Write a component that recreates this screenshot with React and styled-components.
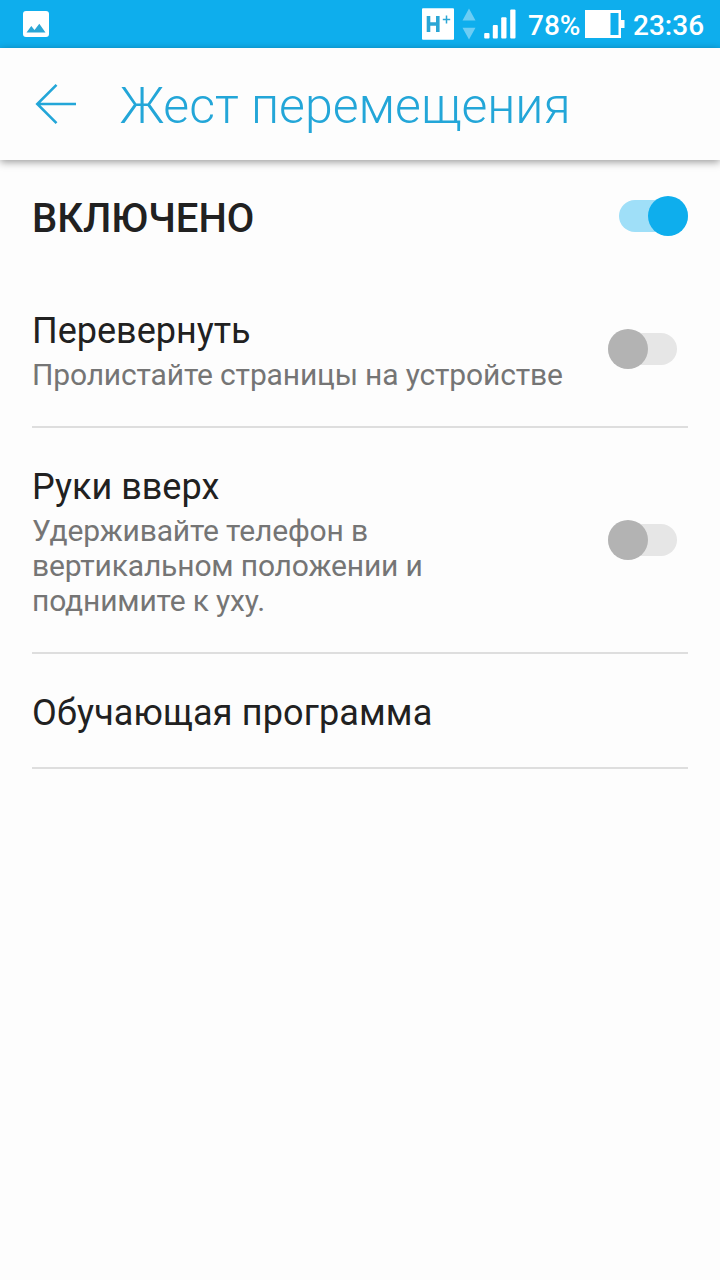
import React from 'react';
import styled, { createGlobalStyle } from 'styled-components';

const GlobalStyle = createGlobalStyle`
  * { box-sizing: border-box; }
  body {
    margin: 0;
    background: #fdfdfd;
    font-family: Roboto, "Noto Sans", sans-serif;
    color: #212121;
  }
`;

const Screen = styled.div`
  display: flex;
  flex-direction: column;
  width: 720px;
  height: 1280px;
  overflow: hidden;
  background: #fdfdfd;
`;

const StatusBar = styled.header`
  display: flex;
  align-items: center;
  justify-content: space-between;
  flex: none;
  height: 48px;
  padding: 0 16px 0 23px;
  background: #0eaeed;
  color: #fff;
`;

const StatusGroup = styled.div`
  display: flex;
  align-items: center;
`;

const StatusText = styled.span`
  font-size: 28px;
  font-weight: 500;
  line-height: 48px;
  padding-top: 2px;
  height: 48px;
  white-space: nowrap;
  width: ${(p) => p.$width}px;
  margin-left: ${(p) => p.$gap}px;
`;

const AppBar = styled.div`
  display: flex;
  align-items: center;
  flex: none;
  height: 112px;
  padding-left: 35px;
  background: #fdfdfd;
  color: #23a6d8;
  box-shadow: 0 2px 8px rgba(0, 0, 0, 0.4);
`;

const Title = styled.h1`
  margin: 4px 0 0 43px;
  font-size: 50px;
  font-weight: 300;
  line-height: 60px;
  white-space: nowrap;
`;

const Content = styled.main`
  display: flex;
  flex-direction: column;
  padding: 0 32px;
`;

const MasterRow = styled.section`
  display: flex;
  align-items: center;
  justify-content: space-between;
  height: 112px;
`;

const MasterLabel = styled.h2`
  margin: 6px 0 0;
  font-size: 40px;
  font-weight: 500;
  line-height: 48px;
`;

const Row = styled.section`
  display: flex;
  align-items: center;
  justify-content: space-between;
  height: ${(p) => p.$height}px;
  padding-right: 11px;
  border-bottom: 2px solid #dedede;
`;

const RowText = styled.div`
  display: flex;
  flex-direction: column;
  width: 544px;
  padding-top: ${(p) => p.$shift || 0}px;
`;

const RowTitle = styled.h3`
  margin: 0;
  font-size: 36px;
  font-weight: 400;
  line-height: 42px;
  letter-spacing: ${(p) => p.$tracking || 0}px;
  white-space: nowrap;
`;

const RowSummary = styled.p`
  margin: 5px 0 0;
  font-size: 30px;
  line-height: 35px;
  letter-spacing: -0.155px;
  color: #757575;
  white-space: pre-line;
`;

const Track = styled.button`
  display: flex;
  align-items: center;
  justify-content: ${(p) => (p.$on ? 'flex-end' : 'flex-start')};
  flex: none;
  width: 69px;
  height: 32px;
  padding: 0;
  border: 0;
  border-radius: 16px;
  background: ${(p) => (p.$on ? '#9fdff8' : '#e6e6e6')};
`;

const Knob = styled.span`
  flex: none;
  width: 40px;
  height: 40px;
  border-radius: 50%;
  background: ${(p) => (p.$on ? '#0eaeed' : '#b3b3b3')};
`;

const Switch = ({ on = false, label }) => (
  <Track type="button" role="switch" aria-checked={on} aria-label={label} $on={on}>
    <Knob $on={on} />
  </Track>
);

const PictureIcon = () => (
  <svg width="26" height="26" viewBox="0 0 26 26">
    <rect width="26" height="26" rx="3" fill="#fff" />
    <path d="M3.5 21.5 8.3 15l3.2 4 4.8-6.2 6.2 8.7z" fill="#2ba6d5" />
  </svg>
);

const NetworkIcon = () => (
  <svg width="96" height="48" viewBox="0 0 96 48">
    <rect x="0" y="8.3" width="32" height="31.4" rx="1" fill="#fff" />
    <path d="M6.5 16v16M15.8 16v16M6.5 24h9.3" stroke="#2ba6d5" strokeWidth="3.6" fill="none" />
    <path d="M20.8 19.5h7.4M24.5 15.6v7.8" stroke="#2ba6d5" strokeWidth="1.5" fill="none" />
    <path d="M47 8.5 53.5 20.5h-13zM40.5 27.7h13L47 39.5z" fill="#6dcdf4" />
    <g fill="#fff">
      <rect x="62.2" y="33" width="5.3" height="5.5" rx="1" />
      <rect x="70.8" y="25" width="5" height="13.5" rx="1" />
      <rect x="79.2" y="17.3" width="5.3" height="21.2" rx="1" />
      <rect x="88.2" y="9.5" width="5.3" height="29" rx="1" />
    </g>
  </svg>
);

const BatteryIcon = () => (
  <svg width="40" height="48" viewBox="0 0 40 48">
    <path fillRule="evenodd" fill="#fff" d="M0 10h36v28H0zM25.5 13v22h8V13z" />
    <rect x="36" y="20" width="3.5" height="8" fill="#fff" />
  </svg>
);

const BackIcon = () => (
  <svg width="42" height="42" viewBox="0 0 42 42" fill="none" stroke="currentColor" strokeWidth="2.6">
    <path d="M21.5 1.8 2.3 21l19.2 19.2M2.3 21H41" />
  </svg>
);

export default function App() {
  return (
    <Screen>
      <GlobalStyle />
      <StatusBar>
        <PictureIcon />
        <StatusGroup>
          <NetworkIcon />
          <StatusText $width={57} $gap={10}>78%</StatusText>
          <BatteryIcon />
          <StatusText $width={71} $gap={8}>23:36</StatusText>
        </StatusGroup>
      </StatusBar>
      <AppBar>
        <BackIcon />
        <Title>Жест перемещения</Title>
      </AppBar>
      <Content>
        <MasterRow>
          <MasterLabel>ВКЛЮЧЕНО</MasterLabel>
          <Switch on label="Включено" />
        </MasterRow>
        <Row $height={156}>
          <RowText $shift={3}>
            <RowTitle>Перевернуть</RowTitle>
            <RowSummary>Пролистайте страницы на устройстве</RowSummary>
          </RowText>
          <Switch label="Перевернуть" />
        </Row>
        <Row $height={226}>
          <RowText $shift={3}>
            <RowTitle>Руки вверх</RowTitle>
            <RowSummary>{'Удерживайте телефон в\nвертикальном положении и\nподнимите к уху.'}</RowSummary>
          </RowText>
          <Switch label="Руки вверх" />
        </Row>
        <Row $height={115}>
          <RowText $shift={5}>
            <RowTitle $tracking={0.14}>Обучающая программа</RowTitle>
          </RowText>
        </Row>
      </Content>
    </Screen>
  );
}
